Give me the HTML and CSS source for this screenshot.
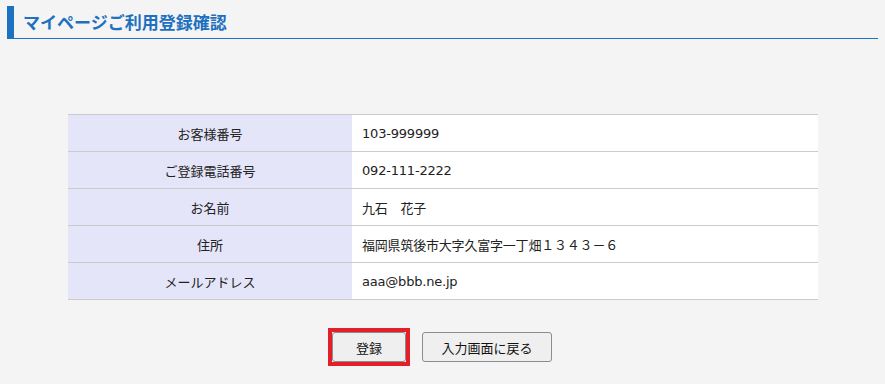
FILE: index.html
```html
<!DOCTYPE html>
<html lang="ja">
<head>
    <meta charset="UTF-8">
    <meta name="viewport" content="width=device-width, initial-scale=1.0">
    <title>マイページご利用登録確認</title>
    <link rel="stylesheet" href="styles.css">
</head>
<body>
    <div class="page">
        <h1 class="page-title">マイページご利用登録確認</h1>

        <table class="confirm-table">
            <tr>
                <th>お客様番号</th>
                <td>103-999999</td>
            </tr>
            <tr>
                <th>ご登録電話番号</th>
                <td>092-111-2222</td>
            </tr>
            <tr>
                <th>お名前</th>
                <td>九石　花子</td>
            </tr>
            <tr>
                <th>住所</th>
                <td>福岡県筑後市大字久富字一丁畑１３４３－６</td>
            </tr>
            <tr>
                <th>メールアドレス</th>
                <td>aaa@bbb.ne.jp</td>
            </tr>
        </table>

        <div class="actions">
            <span class="focus-ring"><button type="submit" class="btn btn-register">登録</button></span>
            <button type="button" class="btn btn-back">入力画面に戻る</button>
        </div>
    </div>
</body>
</html>
```

FILE: styles.css
```css
body {
    margin: 0;
    padding: 0;
    font-family: "DejaVu Sans", "Noto Sans CJK JP", sans-serif;
    background-color: #f4f4f4;
    color: #222;
}

.page {
    padding: 6px 7px 0;
}

.page-title {
    margin: 0;
    height: 32px;
    line-height: 31px;
    padding-left: 9px;
    border-left: 7px solid #1e70c0;
    border-bottom: 1px solid #1e70c0;
    font-family: "Noto Sans CJK JP", sans-serif;
    font-size: 17px;
    font-weight: bold;
    color: #1e70c0;
}

.confirm-table {
    width: 750px;
    margin: 75px 0 0 61px;
    border-collapse: collapse;
    font-size: 13px;
}

.confirm-table th,
.confirm-table td {
    height: 36px;
    padding: 0 10px;
    border-top: 1px solid #cbcbcb;
    border-bottom: 1px solid #cbcbcb;
    font-family: "Noto Sans CJK JP", sans-serif;
    font-weight: normal;
}

.confirm-table th {
    width: 264px;
    background-color: #e5e5f9;
    text-align: center;
}

.confirm-table td {
    background-color: #fff;
    text-align: left;
    font-family: "DejaVu Sans", "Noto Sans CJK JP", sans-serif;
    font-size: 13px;
    letter-spacing: -0.2px;
}

.actions {
    display: flex;
    justify-content: center;
    align-items: center;
    gap: 12px;
    margin-top: 28px;
    padding-right: 5px;
}

.focus-ring {
    display: inline-flex;
    border: 4px solid #e3202a;
}

.btn {
    height: 30px;
    padding: 0;
    font-family: "Noto Sans CJK JP", sans-serif;
    font-size: 13px;
    color: #111;
    background-color: #efefef;
    border: 1px solid #8c8c8c;
    border-radius: 3px;
    cursor: pointer;
}

.btn-register {
    width: 74px;
}

.btn-back {
    width: 130px;
}
```
